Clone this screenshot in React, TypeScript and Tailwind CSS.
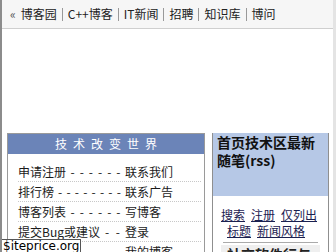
import React from "react";

const cjk = { fontFamily: '"Noto Sans CJK SC", "Noto Sans", sans-serif' };

const navItems = ["博客园", "C++博客", "IT新闻", "招聘", "知识库", "博问"];

const rows: { left: string; dashes: number; right: string }[] = [
  { left: "申请注册", dashes: 6, right: "联系我们" },
  { left: "排行榜", dashes: 8, right: "联系广告" },
  { left: "博客列表", dashes: 6, right: "写博客" },
  { left: "提交Bug或建议", dashes: 2, right: "登录" },
  { left: "博客园小组", dashes: 4, right: "我的博客" },
];

function Dashes({ n }: { n: number }) {
  return (
    <span className="flex flex-1 justify-around px-[2px]">
      {Array.from({ length: n }).map((_, i) => (
        <span key={i}>-</span>
      ))}
    </span>
  );
}

export default function App() {
  return (
    <div
      className="relative w-[336px] h-[252px] overflow-hidden bg-white border-l-2 border-l-[#8c8c8c] border-r-[3px] border-r-[#e4e4e4] text-[#333]"
      style={cjk}
    >
      <div className="h-[29px] bg-[#f6f6f6] border-b border-[#cfcfcf] flex items-center pl-[8px] text-[12px] leading-[16px] text-[#222]">
        <span className="mr-[5px] text-[#555]">«</span>
        {navItems.map((t, i) => (
          <React.Fragment key={t}>
            {i > 0 && <span className="mx-[5px] w-px h-[13px] bg-[#999]" />}
            <span>{t}</span>
          </React.Fragment>
        ))}
      </div>

      <div className="flex gap-[7px] pl-[5px] pt-[104px]">
        <div className="w-[198px] h-[130px] border border-[#9a9a9a] shrink-0">
          <div className="h-[20px] bg-[#6b84b8] text-white text-[12px] leading-[20px] text-center tracking-[6px] pl-[6px]">
            技术改变世界
          </div>
          <div className="pt-[8px] pl-[10px] pr-[3px] text-[12px] text-[#1a1a1a]">
            {rows.map((r) => (
              <div
                key={r.left}
                className="h-[20px] leading-[19px] flex border-b border-dotted border-[#c8c8c8]"
              >
                <span className="w-[107px] flex">
                  <span>{r.left}</span>
                  <Dashes n={r.dashes} />
                </span>
                <span>{r.right}</span>
              </div>
            ))}
          </div>
        </div>

        <div className="w-[117px] h-[130px] border border-[#8f8f8f] shrink-0">
          <div className="h-[63px] bg-[#b6c8e6] px-[4px] text-[14px] leading-[18px] font-bold text-[#111]">
            <div className="-mt-[1px]">首页技术区最新随笔(rss)</div>
          </div>
          <div className="pt-[11px] pl-[2px] pr-[8px] text-[12px] leading-[16px] text-center text-[#1a2050]">
            <span className="underline mx-[3px]">搜索</span>
            <span className="underline mx-[3px]">注册</span>
            <span className="underline mx-[3px]">仅列出标题</span>
            <span className="underline mx-[3px]">新闻风格</span>
          </div>
          <div className="mx-[10px] mt-[3px] border-t border-[#aaaaaa]" />
          <div className="mx-[8px] mt-[2px] bg-[#efefef] px-[6px] text-[14px] leading-[18px] font-bold text-[#222]">
            社交软件行与
          </div>
        </div>
      </div>

      <div
        className="absolute left-0 bottom-0 h-[13px] bg-white border-t border-r border-[#555] pl-[1px] pr-[1px] text-[12px] leading-[12px] text-black"
        style={{ fontFamily: '"DejaVu Sans", sans-serif' }}
      >
        $iteprice.org
      </div>
    </div>
  );
}
